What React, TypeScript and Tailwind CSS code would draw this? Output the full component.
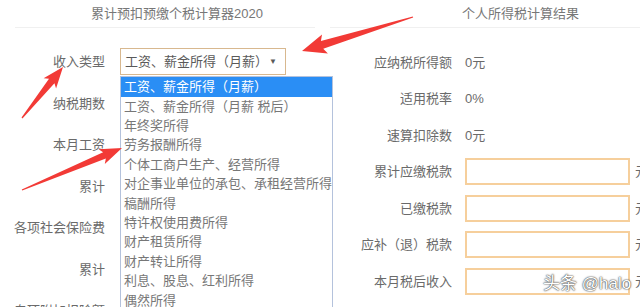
import React from "react";

const leftRows = ["收入类型", "纳税期数", "本月工资", "累计", "各项社会保险费", "累计", "专项附加扣除额"];

const options = [
  "工资、薪金所得（月薪）",
  "工资、薪金所得（月薪 税后）",
  "年终奖所得",
  "劳务报酬所得",
  "个体工商户生产、经营所得",
  "对企事业单位的承包、承租经营所得",
  "稿酬所得",
  "特许权使用费所得",
  "财产租赁所得",
  "财产转让所得",
  "利息、股息、红利所得",
  "偶然所得",
];

const results = [
  { label: "应纳税所得额", value: "0元" },
  { label: "适用税率", value: "0%" },
  { label: "速算扣除数", value: "0元" },
];

const inputRows = ["累计应缴税款", "已缴税款", "应补（退）税款", "本月税后收入"];

// arrow polygon from tail to tip
function arrowPoints(tx: number, ty: number, px: number, py: number, head: number, half: number, shaft: number) {
  const dx = px - tx;
  const dy = py - ty;
  const len = Math.hypot(dx, dy);
  const ux = dx / len;
  const uy = dy / len;
  const nx = -uy;
  const ny = ux;
  const bx = px - ux * head;
  const by = py - uy * head;
  const pts = [
    [tx + nx * 0.6, ty + ny * 0.6],
    [bx + nx * shaft + ux * 3, by + ny * shaft + uy * 3],
    [bx + nx * half, by + ny * half],
    [px, py],
    [bx - nx * half, by - ny * half],
    [bx - nx * shaft + ux * 3, by - ny * shaft + uy * 3],
    [tx - nx * 0.6, ty - ny * 0.6],
  ];
  return pts.map((p) => p.join(",")).join(" ");
}

export default function App() {
  return (
    <div
      className="relative flex w-[640px] h-[307px] overflow-hidden bg-white text-[13px] text-[#6a6a6a]"
      style={{ fontFamily: '"Liberation Sans", "Noto Sans CJK SC", sans-serif' }}
    >
      {/* left: calculator form */}
      <div className="w-[330px] shrink-0">
        <div className="h-[28px] mx-[15px] flex items-center justify-center pl-[24px] border-b border-[#f0f0f0] text-[#777]">
          累计预扣预缴个税计算器2020
        </div>
        <div className="pt-[13px]">
          {leftRows.map((label, i) => (
            <div key={i} className="h-[41.5px] flex items-center">
              <div className="w-[105px] text-right whitespace-nowrap">{label}</div>
              <div className="ml-[15px] relative">
                {i === 0 ? (
                  <>
                    <div className="w-[166px] h-[27px] border border-[#d8b88f] flex items-center justify-between pl-[4px] pr-[8px] text-[#5a5a5a]">
                      <span>工资、薪金所得（月薪）</span>
                      <span className="text-[8px]">▼</span>
                    </div>
                    <div className="absolute z-10 left-0 top-[28px] w-[213px] h-[260px] bg-white border border-[#b4c2dc] text-[#777]">
                      {options.map((opt, j) => (
                        <div
                          key={j}
                          className={`h-[19.4px] flex items-center pl-[3px] whitespace-nowrap ${
                            j === 0 ? "bg-[#2a8ef5] text-white" : ""
                          }`}
                        >
                          {opt}
                        </div>
                      ))}
                    </div>
                  </>
                ) : (
                  <div className="w-[166px] h-[27px] border border-[#f3c894]" />
                )}
              </div>
            </div>
          ))}
        </div>
      </div>

      {/* right: results */}
      <div className="flex-1">
        <div className="h-[28px] flex items-center pl-[132px] border-b border-[#f0f0f0] text-[#777]">
          个人所得税计算结果
        </div>
        <div className="pt-[16px]">
          {results.map((r) => (
            <div key={r.label} className="h-[36.5px] flex items-center">
              <div className="w-[122px] text-right">{r.label}</div>
              <div className="ml-[13px]">{r.value}</div>
            </div>
          ))}
          {inputRows.map((label) => (
            <div key={label} className="h-[36.5px] flex items-center">
              <div className="w-[122px] text-right whitespace-nowrap">{label}</div>
              <div className="ml-[13px] w-[165px] h-[27px] border-2 border-[#f6cf9c] shrink-0" />
              <div className="ml-[5px]">元</div>
            </div>
          ))}
        </div>
      </div>

      {/* annotation arrows */}
      <svg className="absolute inset-0 z-20 pointer-events-none" width="640" height="307">
        <polygon points={arrowPoints(413, 17, 302, 51, 24, 10, 4)} fill="#f23a36" />
        <polygon points={arrowPoints(22, 118, 63, 67, 21, 8, 3.5)} fill="#f23a36" />
        <polygon points={arrowPoints(22, 190, 122, 148, 22, 8, 3.5)} fill="#f23a36" />
      </svg>

      {/* watermark */}
      <div
        className="absolute z-30 left-[543px] top-[273px] text-[17px] leading-[22px] text-white whitespace-nowrap"
        style={{ textShadow: "0 0 2px #333, 0 0 1px #333" }}
      >
        头条 @halo
      </div>
    </div>
  );
}
